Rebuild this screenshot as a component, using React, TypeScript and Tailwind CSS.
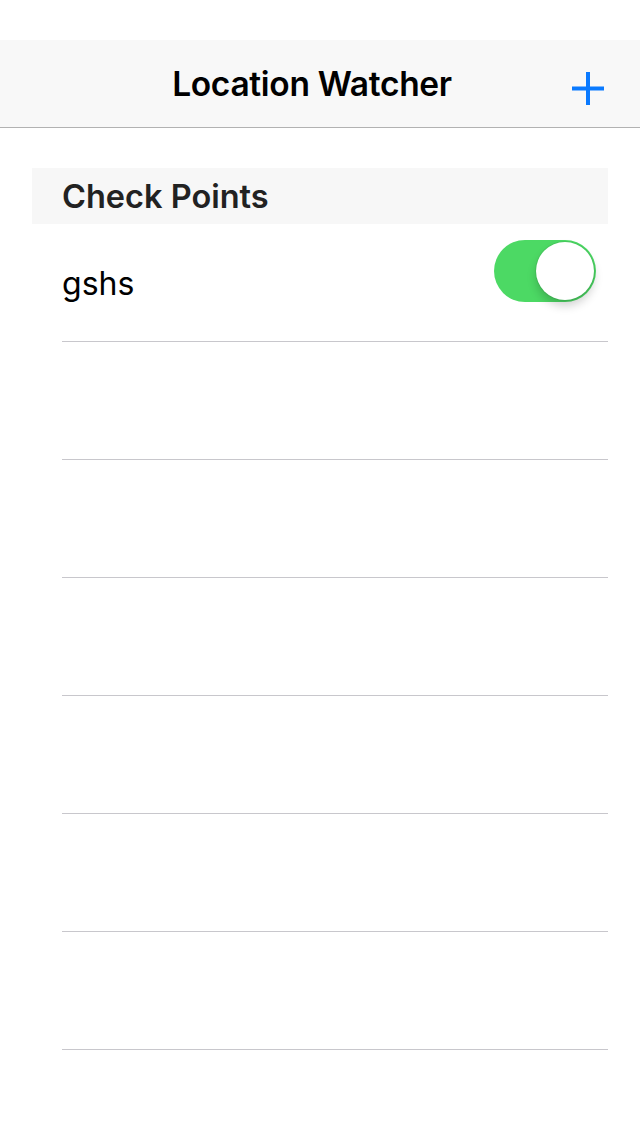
const ROWS = ["gshs", "", "", "", "", "", ""];

const Toggle = ({ on }: { on: boolean }) => (
  <div
    className={`relative h-[62px] w-[102px] rounded-full ${
      on ? "bg-[#4cd964]" : "bg-[#e5e5ea]"
    }`}
  >
    <div
      className={`absolute top-[2px] h-[58px] w-[58px] rounded-full bg-white shadow-[0_6px_10px_rgba(0,0,0,0.18),0_0_0_1px_rgba(0,0,0,0.06)] ${
        on ? "right-[2px]" : "left-[2px]"
      }`}
    />
  </div>
);

export default function App() {
  return (
    <div className="flex min-h-[1136px] w-[640px] flex-col bg-white font-['Inter',sans-serif]">
      <div className="h-10" />
      <div className="relative flex h-[88px] items-center justify-center border-b border-[#b2b2b2] bg-[#f8f8f8] pr-4 pt-[2px]">
        <h1 className="text-[33.5px] font-semibold tracking-[-0.3px] text-black">
          Location Watcher
        </h1>
        <button className="absolute right-[36px] top-[32px] h-[33px] w-[32px]">
          <svg viewBox="0 0 32 33" className="h-full w-full">
            <rect x="14" y="0" width="4" height="33" fill="#0a7aff" />
            <rect x="0" y="14.5" width="32" height="4" fill="#0a7aff" />
          </svg>
        </button>
      </div>

      <div className="mx-8 mt-10">
        <div className="flex h-14 items-center bg-[#f7f7f7] pl-[30px] pt-[3px]">
          <span className="text-[32.5px] font-semibold text-[#222]">Check Points</span>
        </div>
        {ROWS.map((name, i) => (
          <div key={i} className="pl-[30px]">
            <div className="relative flex h-[118px] items-center border-b border-[#c8c7cc] pt-[2px]">
              <span className="text-[32px] text-black">{name}</span>
              {name && (
                <div className="absolute right-3 top-4">
                  <Toggle on />
                </div>
              )}
            </div>
          </div>
        ))}
      </div>
    </div>
  );
}
